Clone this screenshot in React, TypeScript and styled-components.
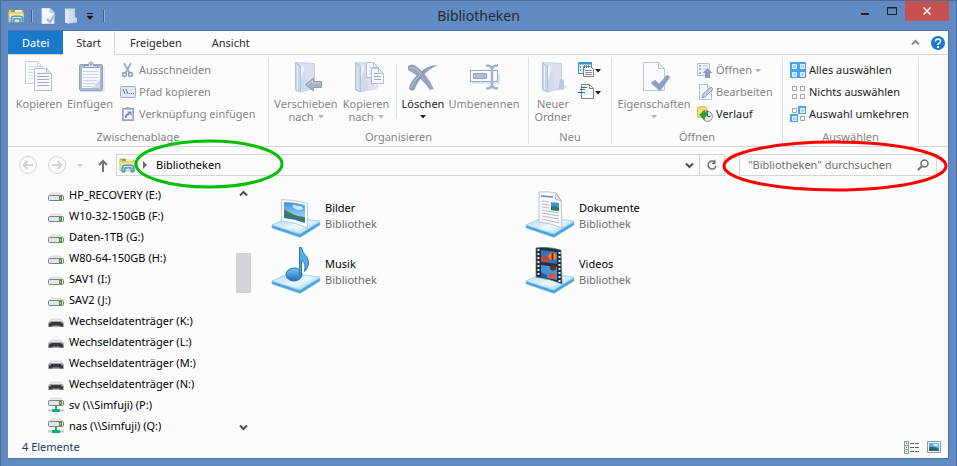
import React from "react";
import styled, { createGlobalStyle, css } from "styled-components";

const Global = createGlobalStyle`
  * { box-sizing: border-box; }
  body { margin: 0; font-family: "Noto Sans", "Open Sans", sans-serif; font-size: 11px; line-height: 14px; color: #000; }
  button, input { font: inherit; color: inherit; border: 0; padding: 0; margin: 0; background: none; }
  svg { display: block; flex: none; overflow: visible; }
`;

const line = "#d5d6d8";
const muted = "#858585";

/* ---------- window frame ---------- */

const Window = styled.div`
  display: flex;
  flex-direction: column;
  min-height: 100vh;
  padding: 0 7px 7px;
  background: #618ac2;
  border: 1px solid #4b6c9c;
`;

const TitleBar = styled.header`
  display: grid;
  grid-template-columns: 1fr auto 1fr;
  height: 29px;
`;

const QuickAccess = styled.div`
  display: flex;
  align-items: center;
`;

const QuickButton = styled.button`
  display: flex;
  margin-left: 8px;
`;

const QuickDivider = styled.span<{ $left: number }>`
  width: 2px;
  height: 12px;
  margin-left: ${(p) => p.$left}px;
  background: #3f608f;
  border-right: 1px solid #93b0d8;
`;

const Title = styled.h1`
  margin: 0;
  font-size: 14px;
  line-height: 30px;
  font-weight: 400;
  color: #262b33;
`;

const Controls = styled.div`
  display: flex;
  justify-content: flex-end;
  align-items: flex-start;
`;

const ControlButton = styled.button<{ $close?: boolean }>`
  display: flex;
  align-items: center;
  justify-content: center;
  width: ${(p) => (p.$close ? 44 : 27)}px;
  height: 20px;
  background: ${(p) => (p.$close ? "#c75050" : "transparent")};
`;

const Client = styled.main`
  display: flex;
  flex-direction: column;
  flex: 1;
  background: #fcfcfd;
  border: 1px solid #4f77ae;
  border-left-width: 0;
`;

/* ---------- tabs ---------- */

const Tabs = styled.nav`
  display: flex;
  align-items: stretch;
  height: 24px;
  border-bottom: 1px solid ${line};
`;

const Tab = styled.button<{ $kind?: "file" | "active" }>`
  padding: 0 15px;
  color: #2b2b2b;
  ${(p) =>
    p.$kind === "file" &&
    css`
      padding: 0 14px;
      background: #1979ca;
      color: #fff;
    `}
  ${(p) =>
    p.$kind === "active" &&
    css`
      padding: 0 13px;
      margin-bottom: -1px;
      background: #fcfcfd;
      border-right: 1px solid ${line};
    `}
`;

const TabTools = styled.div`
  display: flex;
  align-items: center;
  gap: 11px;
  margin-left: auto;
  padding-right: 3px;
  button { display: flex; }
`;

/* ---------- ribbon ---------- */

const Ribbon = styled.div`
  display: flex;
  height: 92px;
  padding: 2px 0;
  border-bottom: 1px solid ${line};
`;

const Group = styled.section<{ $width: number; $pad: number }>`
  display: flex;
  flex-direction: column;
  flex: none;
  width: ${(p) => p.$width}px;
  padding-left: ${(p) => p.$pad}px;
  border-right: 1px solid #dfdff0;
`;

const GroupBody = styled.div`
  display: flex;
  align-items: flex-start;
  height: 72px;
  padding-top: 4px;
`;

const GroupLabel = styled.h2<{ $pad: number }>`
  margin: 0 0 0 -${(p) => p.$pad}px;
  font-size: 11px;
  line-height: 15px;
  font-weight: 400;
  text-align: center;
  color: ${muted};
`;

const LargeButton = styled.button<{ $width: number; $on?: boolean }>`
  display: flex;
  flex-direction: column;
  align-items: center;
  flex: none;
  width: ${(p) => p.$width}px;
  color: ${(p) => (p.$on ? "#1e1e1e" : muted)};
  line-height: 13px;
  white-space: nowrap;
`;

const LargeLabel = styled.span`
  margin-top: 4px;
`;

const Row = styled.span`
  display: flex;
  align-items: center;
  justify-content: center;
  gap: 4px;
  height: 13px;
`;

const SmallColumn = styled.div<{ $left: number }>`
  display: flex;
  flex-direction: column;
  margin-left: ${(p) => p.$left}px;
  margin-top: -2px;
`;

const SmallButton = styled.button<{ $on?: boolean; $gap?: number }>`
  display: flex;
  align-items: center;
  gap: ${(p) => p.$gap ?? 3}px;
  height: 22px;
  color: ${(p) => (p.$on ? "#1e1e1e" : muted)};
  white-space: nowrap;
`;

const InnerDivider = styled.span`
  width: 1px;
  height: 55px;
  margin: 3px 2px 0 4px;
  background: #dfdff0;
`;

/* ---------- address row ---------- */

const AddressRow = styled.div`
  display: flex;
  align-items: center;
  height: 36px;
  padding: 0 11px 0 10px;
`;

const NavButton = styled.button<{ $left?: number }>`
  display: flex;
  margin-left: ${(p) => p.$left ?? 0}px;
`;

const AddressBox = styled.div`
  position: relative;
  display: flex;
  align-items: center;
  flex: 1;
  height: 22px;
  margin-left: 8px;
  padding-left: 2px;
  border: 1px solid ${line};
`;

const Crumb = styled.button`
  display: flex;
  align-items: center;
  gap: 9px;
  margin-left: 7px;
`;

const AddressDrop = styled.button`
  display: flex;
  margin-left: auto;
  padding: 0 5px;
`;

const Refresh = styled.button`
  display: flex;
  align-items: center;
  justify-content: center;
  width: 25px;
  height: 20px;
  border-left: 1px solid ${line};
`;

const SearchBox = styled.label`
  position: relative;
  display: flex;
  align-items: center;
  width: 198px;
  height: 22px;
  margin-left: 14px;
  padding: 0 7px 0 8px;
  border: 1px solid ${line};
  input {
    flex: 1;
    min-width: 0;
    outline: 0;
  }
  input::placeholder { color: #6d6d6d; opacity: 1; }
`;

const Marker = styled.svg<{ $x: number; $y: number }>`
  position: absolute;
  left: ${(p) => p.$x}px;
  top: ${(p) => p.$y}px;
  z-index: 2;
  pointer-events: none;
`;

/* ---------- body ---------- */

const Body = styled.div`
  display: flex;
  flex: 1;
`;

const Tree = styled.ul`
  flex: none;
  width: 228px;
  margin: 0;
  padding: 1px 0 0 40px;
  list-style: none;
`;

const TreeLink = styled.a`
  display: flex;
  align-items: center;
  gap: 5px;
  height: 21px;
  color: #000;
  text-decoration: none;
  white-space: nowrap;
`;

const ScrollTrack = styled.div`
  display: flex;
  flex-direction: column;
  align-items: center;
  width: 15px;
  padding: 7px 0 5px;
  button { display: flex; }
`;

const ScrollThumb = styled.div`
  width: 15px;
  height: 40px;
  margin: 56px 0 auto;
  background: #d3d4d7;
`;

const Libraries = styled.div`
  display: grid;
  grid-template-columns: repeat(2, 254px);
  grid-auto-rows: 56px;
  align-content: start;
  flex: 1;
  padding: 5px 0 0 21px;
`;

const Library = styled.button`
  display: flex;
  align-items: center;
  gap: 5px;
  text-align: left;
  line-height: 16px;
`;

const Kind = styled.span`
  display: block;
  color: #6d6d6d;
`;

const StatusBar = styled.footer`
  display: flex;
  align-items: center;
  gap: 8px;
  height: 22px;
  padding: 0 7px 0 14px;
  color: #1e395b;
  span { margin-right: auto; }
  button { display: flex; }
`;

/* ---------- icons ---------- */

const Caret = ({ color = "#1e1e1e" }: { color?: string }) => (
  <svg width="6" height="3" viewBox="0 0 6 3"><path d="M0 0h6L3 3.500z" fill={color} /></svg>
);

const Chevron = ({ up, color = "#4b4f58" }: { up?: boolean; color?: string }) => (
  <svg width="9" height="7" viewBox="0 0 9 7">
    <path d={up ? "M1 5.500L4.500 2 8 5.500" : "M1 1.500L4.500 5 8 1.500"} fill="none" stroke={color} strokeWidth="2" />
  </svg>
);

const LibraryFolder = () => (
  <svg width="17" height="16" viewBox="0 0 17 16">
    <path d="M1 2h5l1 1h8v4H1z" fill="#ecd67a" stroke="#c9ab49" />
    <path d="M3 2h4v2H3z" fill="#76ad4e" /><path d="M7 2h7v2H7z" fill="#f7f0c4" />
    <path d="M1 5h14.500v9H1z" fill="#f7e89e" stroke="#dcc46c" />
    <path d="M3 15V11q0-3 3-3h6q3 0 3 3v4h-3v-4H6v4z" fill="#6fc0ee" stroke="#348bc4" />
    <path d="M4.500 9.500h9" stroke="#d2f0ff" />
  </svg>
);

const QuickPage = () => (
  <svg width="15" height="16" viewBox="0 0 15 16">
    <path d="M1 .500h8l4 4v11H1z" fill="#f5f8fd" stroke="#dbe4f1" />
    <path d="M9 .500v4h4z" fill="#cdd9ea" stroke="#b7c8df" />
    <path d="M6 11l3 3 4.500-7" fill="none" stroke="#a9bddb" strokeWidth="2.500" />
  </svg>
);

const QuickFolder = () => (
  <svg width="14" height="16" viewBox="0 0 14 16">
    <path d="M1 .500h10v8l2 2v4l-9 1-3-1z" fill="#c5d3e9" />
    <path d="M1 .500l4 2v13l-4-1z" fill="#dfe8f5" /><path d="M5 2.500h4v11l-4 2z" fill="#d1ddee" />
  </svg>
);

const QuickMore = () => (
  <svg width="8" height="8" viewBox="0 0 8 8"><path d="M1 1.500h6" stroke="#10151d" /><path d="M1 4h6L4 7.500z" fill="#10151d" stroke="#10151d" strokeWidth=".500" /></svg>
);

const PageLines = ({ x, y, w, h, ink = "#aeb9d3" }: { x: number; y: number; w: number; h: number; ink?: string }) => (
  <g transform={`translate(${x} ${y})`}>
    <path d={`M.500.500h${w - 6}l5 5v${h - 6}h-${w - 1}z`} fill="#f9fafe" stroke="#b3bfda" />
    <path d={`M${w - 5.500}.500v5h5z`} fill="#e9ecf6" stroke="#b3bfda" />
    {Array.from({ length: Math.floor((h - 9) / 3) + 1 }, (_, i) => (
      <path key={i} d={`M3 ${5.5 + i * 3}h${i === 0 ? w - 9 : w - 6}`} stroke={ink} />
    ))}
  </g>
);

const CopyIcon = () => (
  <svg width="32" height="32" viewBox="0 0 32 32">
    <g opacity=".700"><PageLines x={2} y={0} w={18} h={23} ink="#ccd4e8" /></g>
    <PageLines x={11} y={7} w={18} h={23} ink="#a0acca" />
  </svg>
);

const PasteIcon = () => (
  <svg width="32" height="32" viewBox="0 0 32 32">
    <path d="M6 30.500h24V5" fill="none" stroke="#dfe0ee" />
    <rect x="5.500" y="3.500" width="23" height="26" rx="1.500" fill="#a9b6d0" stroke="#93a2c1" />
    <path d="M8 7h18v20H8z" fill="#f7f8fc" />
    <path d="M9 10.500h15M9 13.500h15M9 16.500h15M9 19.500h14M9 22.500h12M9 25.500h9" stroke="#ccd3e3" />
    <path d="M18 27l8-9v9z" fill="#d4d9e7" />
    <path d="M10.500 6.500V4.500h4Q14.500 1 17 1T19.500 4.500h4v2z" fill="#dbe0ed" stroke="#8d9cbd" />
    <circle cx="17" cy="3.500" r="1" fill="#8d9cbd" />
  </svg>
);

const FolderBase = () => (
  <>
    <path d="M6.500 1.500l19 1v18l-2 7-11 3.500z" fill="#dcdff2" stroke="#c9cfe6" />
    <path d="M6.500 1.500l5 4v25.500l-5-2z" fill="#c9d7ea" stroke="#afc0da" />
    <path d="M8.500 5v23" stroke="#e9eff8" />
    <path d="M12 10l4 2 3 15-7 4z" fill="#cfdcee" />
    <path d="M12 6v13l3-11-1-4z" fill="#f0f2fa" />
  </>
);

const MoveIcon = () => (
  <svg width="34" height="32" viewBox="0 0 34 32">
    <FolderBase />
    <path d="M16.500 23.500l8-6.500v3.500h8v6h-8v3.500z" fill="#a7b4cb" stroke="#8d9cb9" />
    <path d="M18.500 23.500l5-4v2.500h8" fill="none" stroke="#cbd3e2" />
  </svg>
);

const CopyToIcon = () => (
  <svg width="34" height="32" viewBox="0 0 34 32">
    <FolderBase />
    <PageLines x={17} y={1} w={13} h={16} ink="#ccd4e8" />
    <PageLines x={22} y={7} w={13} h={16} ink="#93a2c4" />
    <path d="M20 28q6 1 9-4" fill="none" stroke="#dfe2f1" strokeWidth="3" />
  </svg>
);

const DeleteIcon = () => (
  <svg width="32" height="32" viewBox="0 0 32 32">
    <path d="M1 5Q5 2 9 5q11 8 18 23l-4 1Q13 15 1 9z" fill="#98a5bd" />
    <path d="M31 4Q21 8 14 17q-5 7-6 11-3 3-6 0 0-6 9-15Q20 4 31 4z" fill="#8f9eb9" />
    <path d="M3 6q7 1 12 8M4 27q2-6 9-13" stroke="#b8c3d5" fill="none" />
  </svg>
);

const RenameIcon = () => (
  <svg width="32" height="32" viewBox="0 0 32 32">
    <path d="M4 12h28v11H4z" fill="#e4e5f2" />
    <rect x="2.500" y="9.500" width="27" height="11" fill="#fafbfe" stroke="#9aa8c5" />
    <rect x="5.500" y="12.500" width="13" height="5" fill="#b3bdd5" stroke="#99a7c5" />
    <path d="M18 4.500q6 0 6 4v15q0 4-6 4M30 4.500q-6 0-6 4v15q0 4 6 4" fill="none" stroke="#a5b3ce" strokeWidth="2.500" />
  </svg>
);

const NewFolderIcon = () => (
  <svg width="34" height="32" viewBox="0 0 34 32">
    <path d="M24 24l9 1-6 4-15 1z" fill="#e4e8f2" /><FolderBase />
    <path d="M24 18l4 1v9l-6 1z" fill="#b9c8df" />
  </svg>
);

const PropertiesIcon = () => (
  <svg width="32" height="32" viewBox="0 0 32 32">
    <path d="M5.500 1.500h15l6 6v22h-21z" fill="#f9fafe" stroke="#bcc5dc" />
    <path d="M20.500 1.500v6h6z" fill="#eef0f8" stroke="#bcc5dc" />
    <path d="M13 22l4-3 4 4 8-9 3 2-10 14z" fill="#8f9fbd" stroke="#a8b5ce" />
  </svg>
);

const CutIcon = () => (
  <svg width="16" height="16" viewBox="0 0 16 16">
    <path d="M4 1l5.500 10M11 1L5.500 11" stroke="#a2afc9" strokeWidth="2" />
    <circle cx="4.500" cy="12.500" r="2" fill="none" stroke="#8c9bbb" strokeWidth="1.500" />
    <circle cx="10.500" cy="12.500" r="2" fill="none" stroke="#8c9bbb" strokeWidth="1.500" />
  </svg>
);

const PathIcon = () => (
  <svg width="16" height="16" viewBox="0 0 16 16">
    <rect x=".500" y="2.500" width="15" height="11" rx="1" fill="#e3e8f3" stroke="#a2afc9" />
    <path d="M3 5l2 5M6 5l2 5M9 9.500h1M11 9.500h1M13 9.500h1" stroke="#63718f" />
  </svg>
);

const ShortcutIcon = () => (
  <svg width="16" height="16" viewBox="0 0 16 16">
    <path d="M2.500 2.500h11v12h-11z" fill="#b3bfd7" stroke="#93a2c1" /><path d="M4 4h8v9H4z" fill="#f3f5fa" />
    <path d="M6 1h4v3H6z" fill="#a3b0cc" /><path d="M6 12q-1-3 3-4" stroke="#7c8cae" strokeWidth="2" fill="none" /><path d="M7 5.500h4.500V10z" fill="#7c8cae" />
  </svg>
);

const NewItemIcon = () => (
  <svg width="16" height="16" viewBox="0 0 16 16">
    <path d="M.500.500h13v11H.500z" fill="#e9f6ff" stroke="#2e96d8" /><path d="M1 1.500h12" stroke="#2e96d8" strokeWidth="2" />
    <path d="M2.500 4v6" stroke="#2e96d8" strokeDasharray="2 1" />
    <path d="M5.500 4.500h7l3 3v7h-10z" fill="#fff" stroke="#7d7d85" /><path d="M6 4.500h6" stroke="#7d7d85" strokeDasharray="1 1" strokeWidth="3" />
    <path d="M7 8.500h7M7 10.500h7M7 12.500h7" stroke="#8f8f97" />
  </svg>
);

const EasyAccessIcon = () => (
  <svg width="16" height="16" viewBox="0 0 16 16">
    <path d="M3.500.500h8l4 4v10h-12z" fill="#fcfcfc" stroke="#85828a" /><path d="M11.500.500v4h4" fill="none" stroke="#85828a" />
    <path d="M2 3h1M2 6h1" stroke="#fcfcfd" strokeWidth="2" />
    <path d="M3 3.500h6M2 5.500h5M0 8.500h7" stroke="#1c6fb8" />
  </svg>
);

const OpenIcon = () => (
  <svg width="16" height="16" viewBox="0 0 16 16">
    <path d="M.500 1.500h12v12H.500z" fill="#f4f6fb" stroke="#b3bed5" />
    <path d="M2 3h2v2H2zM2 6h2v2H2zM2 10h2v2H2z" fill="#a9b5cf" /><path d="M5.500 4h5M5.500 7h4" stroke="#b7c1d8" />
    <path d="M10.500 6l5 5h-2.500v5H8v-5H5.500z" fill="#8e9cbc" />
  </svg>
);

const EditIcon = () => (
  <svg width="16" height="16" viewBox="0 0 16 16">
    <path d="M2.500.500h8l4 4v11h-12z" fill="#f6f8fc" stroke="#b3bed5" /><path d="M10.500.500v4h4" fill="none" stroke="#b3bed5" />
    <path d="M5 14l1-4 8-7 2 2-8 8z" fill="#c3cde0" stroke="#93a2c0" />
  </svg>
);

const HistoryIcon = () => (
  <svg width="16" height="16" viewBox="0 0 16 16">
    <path d="M.500 1.500h3V.500h5v1h1v9l-9 1z" fill="#f6dc72" stroke="#dcbb53" />
    <circle cx="10.500" cy="10.500" r="5" fill="#e6ecf4" stroke="#8193ad" /><path d="M10.500 7v3.500h3" fill="none" stroke="#4d5f7c" />
    <path d="M2.500 9l5-5v3q3 0 3-3 1 6-3 7v2.500z" fill="#27a62e" stroke="#15801c" strokeWidth=".500" />
  </svg>
);

const Cell = ({ x, y, on }: { x: number; y: number; on?: boolean }) => (
  <g>
    {on && <path d={`M${x} ${y}h8v8h-8z`} fill="#4ba2ee" />}
    <path d={`M${x + 2.5} ${y + 2.5}h4v4h-4z`} fill={on ? "#a9d6fa" : "#fff"} stroke={on ? "#e9f5ff" : "#a3a3a3"} />
  </g>
);

const SelectIcon = ({ on }: { on: boolean[] }) => (
  <svg width="16" height="16" viewBox="0 0 16 16">
    {on.map((v, i) => <Cell key={i} x={(i % 2) * 8} y={i < 2 ? 0 : 8} on={v} />)}
  </svg>
);

const NavCircle = ({ flip }: { flip?: boolean }) => (
  <svg width="20" height="20" viewBox="0 0 20 20">
    <circle cx="10" cy="10" r="8.500" fill="#fcfcfd" stroke="#d0d3da" />
    <path d={flip ? "M5 10h9M10.500 6l4 4-4 4" : "M15 10H6M9.500 6l-4 4 4 4"} fill="none" stroke="#d0d3da" strokeWidth="2" />
  </svg>
);

const DriveIcon = ({ kind }: { kind: "disk" | "removable" | "network" }) => {
  const dark = kind === "removable";
  const y = kind === "network" ? -5 : 0;
  return (
    <svg width="16" height="16" viewBox="0 0 16 16">
      <g transform={`translate(0 ${y})`}>
        <path d="M3.500 6h9l2.500 2.500H1z" fill="#efe3e6" stroke="#c4c0c4" strokeWidth=".500" />
        {dark ? (
          <>
            <path d="M0 9.500l2-1.500h12l2 1.500V14H0z" fill="#a7a7ab" />
            <path d="M1 11l2.500-2h9l2.500 2v2.500h-2.500l-1.500-1H5l-1.500 1H1z" fill="#39393d" />
          </>
        ) : (
          <>
            <rect x=".500" y="8.500" width="15" height="5" rx="1" fill="#e3e5ed" stroke="#808288" />
            <path d="M11 9h3v4h-3z" fill="#4a9a2b" /><path d="M12 10h1v2h-1z" fill="#8ddb57" />
          </>
        )}
      </g>
      {kind === "network" && (
        <>
          <path d="M0 13.500h16" stroke="#b9c8c6" strokeWidth="2" />
          <path d="M7 9h2v3h3v3H4v-3h3z" fill="#16b26c" />
        </>
      )}
    </svg>
  );
};

type LibraryKind = "pictures" | "documents" | "music" | "videos";

const LibraryIcon = ({ kind }: { kind: LibraryKind }) => (
  <svg width="48" height="48" viewBox="0 0 48 48">
    <defs>
      <linearGradient id={`sky-${kind}`} x2="0" y2="1"><stop stopColor="#3a94e0" /><stop offset="1" stopColor="#c2ecf9" /></linearGradient>
      <linearGradient id={`base-${kind}`} x2="1" y2="1"><stop stopColor="#b4dcf4" /><stop offset=".500" stopColor="#e2f2fb" /><stop offset="1" stopColor="#a3d5f2" /></linearGradient>
      <linearGradient id={`note-${kind}`} x2="0" y2="1"><stop stopColor="#7cc4f0" /><stop offset="1" stopColor="#1d6fba" /></linearGradient>
    </defs>
    <path d="M0 33l27 9 21-12v3L28 45.500 0 36z" fill="#4ba3dd" stroke="#8ac2e4" strokeWidth=".500" />
    <path d="M0 33l17-8 31 4-20 13z" fill={`url(#base-${kind})`} stroke="#8fc9ea" strokeWidth=".700" />
    <path d="M14 36l16-8 11 2-14 9z" fill="#fff" opacity=".350" />
    {kind === "pictures" && (
      <>
        <path d="M9.500 7.500q13 0 26 4V36q-12-6-26-7z" fill="#fff" stroke="#a7b1bd" strokeWidth=".700" />
        <path d="M12 10q10 0 21 3v18q-10-4-21-5z" fill={`url(#sky-${kind})`} />
        <path d="M12 17q9 7 21 8v3q-10-2-21-4z" fill="#4a7b50" />
        <path d="M12 22q12 4 21 5v4q-10-4-21-5z" fill="#2b7a98" />
        <path d="M20 14q3-3 5 0 5-1 6 3-6 3-11-3z" fill="#e4f5fd" opacity=".800" />
      </>
    )}
    {kind === "documents" && (
      <>
        <path d="M13 0q8-1 17 1l5 7 1 28q-11-5-23-6z" fill="#f7f8fc" stroke="#a6abb8" strokeWidth=".700" />
        <path d="M30 1l-1 6 6 2z" fill="#dde3ec" stroke="#a6abb8" strokeWidth=".700" />
        <path d="M15 4l12 1" stroke="#4299ad" strokeWidth="1.500" />
        <path d="M16 9l7 1M16 12l7 1M16 15l7 1M16 18l17 3M16 21l17 3M16 24l17 3M16 27l17 4" stroke="#b5bacb" />
        <path d="M25 10l8 1v8l-8-1z" fill="#3f93d0" /><path d="M25 15l4-1 4 2v3l-8-1z" fill="#3a7556" />
      </>
    )}
    {kind === "music" && (
      <>
        <ellipse cx="22" cy="26.500" rx="8" ry="6.500" fill={`url(#note-${kind})`} stroke="#2676b2" />
        <path d="M27.500-.500h2q1 6 5 9 5 8-2 15 2-9-3-11v15h-2z" fill="#56aee5" stroke="#2676b2" />
      </>
    )}
    {kind === "videos" && (
      <>
        <path d="M10 0q9-2 25 2l1 34q-11-5-26-7z" fill="#2b2d33" stroke="#477f88" strokeWidth=".700" />
        <path d="M15 2l16 2v12l-16-2z" fill="#2277cf" /><path d="M15 17l16 2v13l-16-3z" fill="#3f95dc" />
        <path d="M15 12l2-6 2 5 2-6 2 9-8-1z" fill="#df3e22" /><circle cx="26.500" cy="8.500" r="4" fill="#e88a1e" /><path d="M26.500 4.500v8" stroke="#9c1f20" strokeWidth="2" />
        <circle cx="26" cy="28" r="3" fill="#e25824" /><circle cx="27" cy="19.500" r="3" fill="#5a3428" />
        <path d="M15 24l6 3v4l-6-2z" fill="#31569d" />
        <path d="M12.500 1v27M33.500 4v30" stroke="#e4eff0" strokeWidth="2" strokeDasharray="2 2" />
      </>
    )}
  </svg>
);

/* ---------- data ---------- */

const drives: { name: string; kind: "disk" | "removable" | "network" }[] = [
  { name: "HP_RECOVERY (E:)", kind: "disk" },
  { name: "W10-32-150GB (F:)", kind: "disk" },
  { name: "Daten-1TB (G:)", kind: "disk" },
  { name: "W80-64-150GB (H:)", kind: "disk" },
  { name: "SAV1 (I:)", kind: "disk" },
  { name: "SAV2 (J:)", kind: "disk" },
  { name: "Wechseldatenträger (K:)", kind: "removable" },
  { name: "Wechseldatenträger (L:)", kind: "removable" },
  { name: "Wechseldatenträger (M:)", kind: "removable" },
  { name: "Wechseldatenträger (N:)", kind: "removable" },
  { name: "sv (\\\\Simfuji) (P:)", kind: "network" },
  { name: "nas (\\\\Simfuji) (Q:)", kind: "network" },
];

const libraries: { name: string; kind: LibraryKind }[] = [
  { name: "Bilder", kind: "pictures" },
  { name: "Dokumente", kind: "documents" },
  { name: "Musik", kind: "music" },
  { name: "Videos", kind: "videos" },
];

const RibbonGroup = ({ label, width, pad, children }: { label: string; width: number; pad: number; children: React.ReactNode }) => (
  <Group $width={width} $pad={pad}>
    <GroupBody>{children}</GroupBody>
    <GroupLabel $pad={pad}>{label}</GroupLabel>
  </Group>
);

const Large = ({ icon, label, second, width, on, drop }: { icon: React.ReactNode; label: string; second?: string; width: number; on?: boolean; drop?: boolean }) => (
  <LargeButton $width={width} $on={on}>
    {icon}
    <LargeLabel>{label}</LargeLabel>
    <Row>
      {second}
      {drop && <Caret color={on ? "#1e1e1e" : "#b4b4b4"} />}
    </Row>
  </LargeButton>
);

export default function App() {
  return (
    <>
      <Global />
      <Window>
        <TitleBar>
          <QuickAccess>
            <LibraryFolder />
            <QuickDivider $left={6} />
            <QuickButton aria-label="Eigenschaften"><QuickPage /></QuickButton>
            <QuickButton aria-label="Neuer Ordner"><QuickFolder /></QuickButton>
            <QuickButton aria-label="Anpassen"><QuickMore /></QuickButton>
            <QuickDivider $left={9} />
          </QuickAccess>
          <Title>Bibliotheken</Title>
          <Controls>
            <ControlButton aria-label="Minimieren">
              <svg width="10" height="10"><path d="M1 8h8" stroke="#1e2228" strokeWidth="2" /></svg>
            </ControlButton>
            <ControlButton aria-label="Maximieren">
              <svg width="10" height="8"><path d="M.500.500h9v7h-9zM0 1h10" fill="none" stroke="#1e2228" /></svg>
            </ControlButton>
            <ControlButton $close aria-label="Schließen">
              <svg width="8" height="8"><path d="M.500.500l7 7M7.500.500l-7 7" stroke="#fff" strokeWidth="1.500" /></svg>
            </ControlButton>
          </Controls>
        </TitleBar>
        <Client>
          <Tabs>
            <Tab $kind="file">Datei</Tab>
            <Tab $kind="active">Start</Tab>
            <Tab>Freigeben</Tab>
            <Tab>Ansicht</Tab>
            <TabTools>
              <button aria-label="Menüband minimieren"><Chevron up color="#8d8d86" /></button>
              <button aria-label="Hilfe">
                <svg width="14" height="14" viewBox="0 0 14 14">
                  <circle cx="7" cy="7" r="7" fill="#1979ca" />
                  <path d="M4.500 5.500Q4.500 3 7 3t2.500 2Q9.500 6.500 7 8v1" fill="none" stroke="#fff" strokeWidth="1.500" /><path d="M6 10h2v2H6z" fill="#fff" />
                </svg>
              </button>
            </TabTools>
          </Tabs>
          <Ribbon>
            <RibbonGroup label="Zwischenablage" width={261} pad={5}>
              <Large icon={<CopyIcon />} label="Kopieren" width={52} />
              <Large icon={<PasteIcon />} label="Einfügen" width={50} />
              <SmallColumn $left={5}>
                <SmallButton><CutIcon />Ausschneiden</SmallButton>
                <SmallButton><PathIcon />Pfad kopieren</SmallButton>
                <SmallButton><ShortcutIcon />Verknüpfung einfügen</SmallButton>
              </SmallColumn>
            </RibbonGroup>
            <RibbonGroup label="Organisieren" width={260} pad={3}>
              <Large icon={<MoveIcon />} label="Verschieben" second="nach" width={68} drop />
              <Large icon={<CopyToIcon />} label="Kopieren" second="nach" width={52} drop />
              <InnerDivider />
              <Large icon={<DeleteIcon />} label="Löschen" width={48} on drop />
              <Large icon={<RenameIcon />} label="Umbenennen" width={74} />
            </RibbonGroup>
            <RibbonGroup label="Neu" width={83} pad={4}>
              <Large icon={<NewFolderIcon />} label="Neuer" second="Ordner" width={40} />
              <SmallColumn $left={5}>
                <SmallButton $on $gap={1} aria-label="Neues Element"><NewItemIcon /><Caret /></SmallButton>
                <SmallButton $on $gap={1} aria-label="Einfacher Zugriff"><EasyAccessIcon /><Caret /></SmallButton>
              </SmallColumn>
            </RibbonGroup>
            <RibbonGroup label="Öffnen" width={171} pad={3}>
              <Large icon={<PropertiesIcon />} label="Eigenschaften" width={78} drop />
              <SmallColumn $left={4}>
                <SmallButton><OpenIcon />Öffnen<Caret color="#b4b4b4" /></SmallButton>
                <SmallButton><EditIcon />Bearbeiten</SmallButton>
                <SmallButton $on><HistoryIcon />Verlauf</SmallButton>
              </SmallColumn>
            </RibbonGroup>
            <RibbonGroup label="Auswählen" width={136} pad={3}>
              <SmallColumn $left={4}>
                <SmallButton $on><SelectIcon on={[true, true, true, true]} />Alles auswählen</SmallButton>
                <SmallButton $on><SelectIcon on={[false, false, false, false]} />Nichts auswählen</SmallButton>
                <SmallButton $on><SelectIcon on={[false, true, true, false]} />Auswahl umkehren</SmallButton>
              </SmallColumn>
            </RibbonGroup>
          </Ribbon>
          <AddressRow>
            <NavButton aria-label="Zurück"><NavCircle /></NavButton>
            <NavButton $left={9} aria-label="Vorwärts"><NavCircle flip /></NavButton>
            <NavButton $left={10} aria-label="Verlauf"><Caret color="#cdd0d8" /></NavButton>
            <NavButton $left={15} aria-label="Nach oben">
              <svg width="10" height="13" viewBox="0 0 10 13"><path d="M5 13V2M1 6l4-4 4 4" fill="none" stroke="#71757e" strokeWidth="2" /></svg>
            </NavButton>
            <AddressBox>
              <LibraryFolder />
              <Crumb>
                <svg width="4" height="8" viewBox="0 0 4 8"><path d="M0 0l4 4-4 4z" fill="#6b6b6b" /></svg>
                Bibliotheken
              </Crumb>
              <AddressDrop aria-label="Adressen"><Chevron /></AddressDrop>
              <Refresh aria-label="Aktualisieren">
                <svg width="12" height="12" viewBox="0 0 12 12"><path d="M8 2.500A4 4 0 1 0 10 7" fill="none" stroke="#6e7178" strokeWidth="1.500" /><path d="M9.500 0v5h-4z" fill="#6e7178" /></svg>
              </Refresh>
              <Marker $x={17} $y={-16} width="150" height="50" aria-hidden="true">
                <ellipse cx="75" cy="25" rx="73" ry="23" fill="none" stroke="#00c000" strokeWidth="3" />
              </Marker>
            </AddressBox>
            <SearchBox>
              <input type="text" aria-label="Suchen" placeholder={'"Bibliotheken" durchsuchen'} />
              <svg width="12" height="12" viewBox="0 0 12 12"><circle cx="7.500" cy="4.500" r="3.500" fill="none" stroke="#6e6f76" strokeWidth="1.500" /><path d="M5 7l-4 4" stroke="#6e6f76" strokeWidth="2" /></svg>
              <Marker $x={-18} $y={-16} width="226" height="54" aria-hidden="true">
                <ellipse cx="113" cy="27" rx="111" ry="24" fill="none" stroke="#ff0000" strokeWidth="3" />
              </Marker>
            </SearchBox>
          </AddressRow>
          <Body>
            <Tree>
              {drives.map((d) => (
                <li key={d.name}><TreeLink href="#"><DriveIcon kind={d.kind} />{d.name}</TreeLink></li>
              ))}
            </Tree>
            <ScrollTrack>
              <button aria-label="Nach oben blättern"><Chevron up /></button>
              <ScrollThumb />
              <button aria-label="Nach unten blättern"><Chevron /></button>
            </ScrollTrack>
            <Libraries>
              {libraries.map((l) => (
                <Library key={l.name}>
                  <LibraryIcon kind={l.kind} />
                  <span>{l.name}<Kind>Bibliothek</Kind></span>
                </Library>
              ))}
            </Libraries>
          </Body>
          <StatusBar>
            <span>4 Elemente</span>
            <button aria-label="Details">
              <svg width="15" height="13" viewBox="0 0 15 13">
                <path d="M.500.500h4v4h-4zM.500 4.500h4v4h-4zM.500 8.500h4v4h-4z" fill="#fff" stroke="#8794a8" />
                <path d="M2 2h1v1H2zM2 10h1v1H2z" fill="#43546c" /><path d="M2 6h1v1H2z" fill="#d22" />
                <path d="M6 2.500h4M11 2.500h4M6 6.500h4M11 6.500h4M6 10.500h4M11 10.500h4" stroke="#5a6678" />
              </svg>
            </button>
            <button aria-label="Große Symbole">
              <svg width="14" height="12" viewBox="0 0 14 12">
                <path d="M.500.500h13v11H.500z" fill="#fff" stroke="#8b97ae" /><path d="M2 2h10v8H2z" fill="#5eb4e6" /><path d="M2 6q5-1 10 2v2H2z" fill="#2b6a6c" /><path d="M6 3h5v2H7z" fill="#d7f0fb" />
              </svg>
            </button>
          </StatusBar>
        </Client>
      </Window>
    </>
  );
}
